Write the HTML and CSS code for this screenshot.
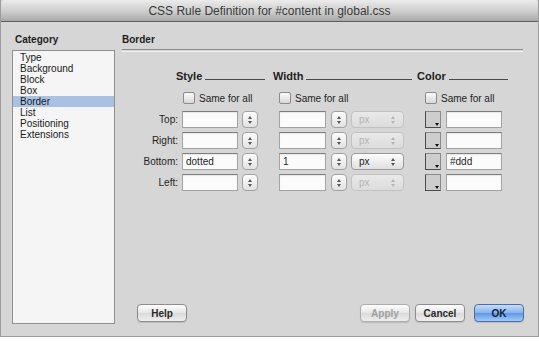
FILE: index.html
```html
<!DOCTYPE html>
<html lang="en">
<head>
  <meta charset="UTF-8">
  <title>CSS Rule Definition</title>
  <link rel="stylesheet" href="styles.css">
</head>
<body>
  <div class="window">
    <div class="titlebar">CSS Rule Definition for #content in global.css</div>

    <div class="content">
      <div class="sidebar">
        <div class="pane-label">Category</div>
        <div class="category-list">
          <div class="category">Type</div>
          <div class="category">Background</div>
          <div class="category">Block</div>
          <div class="category">Box</div>
          <div class="category selected">Border</div>
          <div class="category">List</div>
          <div class="category">Positioning</div>
          <div class="category">Extensions</div>
        </div>
      </div>

      <div class="main">
        <div class="pane-label">Border</div>
        <div class="divider"></div>

        <div class="border-grid">
          <!-- headers -->
          <div></div>
          <div class="col-head head-style"><span>Style</span><i class="rule"></i></div>
          <div class="col-head head-width"><span>Width</span><i class="rule"></i></div>
          <div class="col-head head-color"><span>Color</span><i class="rule"></i></div>

          <!-- same for all -->
          <div></div>
          <div class="check-cell cell-style"><span class="checkbox"></span>Same for all</div>
          <div class="check-cell cell-width"><span class="checkbox"></span>Same for all</div>
          <div class="check-cell cell-color"><span class="checkbox"></span>Same for all</div>

          <!-- Top -->
          <div class="side-label">Top:</div>
          <div class="field-cell cell-style"><span class="text-field style-field"></span><span class="stepper"></span></div>
          <div class="field-cell cell-width"><span class="text-field width-field"></span><span class="stepper"></span><span class="select disabled">px</span></div>
          <div class="field-cell cell-color"><span class="swatch"></span><span class="text-field color-field"></span></div>

          <!-- Right -->
          <div class="side-label">Right:</div>
          <div class="field-cell cell-style"><span class="text-field style-field"></span><span class="stepper"></span></div>
          <div class="field-cell cell-width"><span class="text-field width-field"></span><span class="stepper"></span><span class="select disabled">px</span></div>
          <div class="field-cell cell-color"><span class="swatch"></span><span class="text-field color-field"></span></div>

          <!-- Bottom -->
          <div class="side-label">Bottom:</div>
          <div class="field-cell cell-style"><span class="text-field style-field">dotted</span><span class="stepper"></span></div>
          <div class="field-cell cell-width"><span class="text-field width-field">1</span><span class="stepper"></span><span class="select">px</span></div>
          <div class="field-cell cell-color"><span class="swatch"></span><span class="text-field color-field">#ddd</span></div>

          <!-- Left -->
          <div class="side-label">Left:</div>
          <div class="field-cell cell-style"><span class="text-field style-field"></span><span class="stepper"></span></div>
          <div class="field-cell cell-width"><span class="text-field width-field"></span><span class="stepper"></span><span class="select disabled">px</span></div>
          <div class="field-cell cell-color"><span class="swatch"></span><span class="text-field color-field"></span></div>
        </div>

        <div class="buttons">
          <button class="btn btn-help">Help</button>
          <div class="spacer"></div>
          <button class="btn btn-apply" disabled>Apply</button>
          <button class="btn btn-cancel">Cancel</button>
          <button class="btn btn-ok">OK</button>
        </div>
      </div>
    </div>
  </div>
</body>
</html>
```

FILE: styles.css
```css
body {
  margin: 0;
  background: #fff;
  font-family: "Liberation Sans", Arial, sans-serif;
  font-size: 10px;
  color: #1e1e1e;
}
.window {
  width: 539px;
  height: 337px;
  box-sizing: border-box;
  background: #d6d6d6;
  border: 1px solid #9c9c9c;
  border-top: none;
  display: flex;
  flex-direction: column;
}
.titlebar {
  height: 21px;
  flex: none;
  line-height: 22px;
  text-align: center;
  font-size: 12px;
  color: #3a3a3a;
  background: linear-gradient(#ececec, #c9c9c9 60%, #a8a8a8);
  border-bottom: 1px solid #5f5f5f;
  border-radius: 4px 4px 0 0;
}
.content {
  flex: 1;
  display: flex;
  gap: 7px;
  padding: 12px 13px 12px 11px;
  min-height: 0;
}
.pane-label {
  font-weight: bold;
  line-height: 12px;
  height: 12px;
}

/* sidebar */
.sidebar {
  width: 103px;
  display: flex;
  flex-direction: column;
}
.sidebar .pane-label {
  padding-left: 3px;
}
.category-list {
  flex: 1;
  margin-top: 4px;
  background: #f5f5f5;
  border: 1px solid #8f8f8f;
  padding-top: 1px;
}
.category {
  line-height: 11px;
  height: 11px;
  padding-left: 7px;
  color: #1a1a1a;
}
.category.selected {
  background: #a9c2e4;
}

/* main */
.main {
  flex: 1;
  display: flex;
  flex-direction: column;
}
.divider {
  margin-top: 3px;
  height: 1px;
  border-top: 1px solid #8c8c8c;
  border-bottom: 1px solid #f2f2f2;
  margin-right: 2px;
}
.border-grid {
  margin-top: 18px;
  display: grid;
  grid-template-columns: 56px 94px 144px 109px;
  grid-template-rows: 12px 21px repeat(4, 17px);
  row-gap: 4px;
}
.col-head {
  display: flex;
  align-items: flex-end;
}
.col-head span {
  font-size: 11px;
  font-weight: bold;
  line-height: 12px;
  color: #222;
}
.col-head .rule {
  flex: 1;
  border-bottom: 1px solid #4a4a4a;
  margin: 0 0 2px 3px;
}
.head-style { margin: 0 7px 0 -2px; }
.head-width { margin: 0 4px 0 1px; }
.head-color { margin: 0 17px 0 1px; }

.check-cell {
  display: flex;
  align-items: center;
  gap: 4px;
  align-self: end;
  margin-bottom: 3px;
  height: 12px;
}
.checkbox {
  width: 10px;
  height: 10px;
  border: 1px solid #8a8a8a;
  border-radius: 2px;
  background: linear-gradient(#fafafa, #d8d8d8);
}
.cell-style { padding-left: 4px; }
.cell-width { padding-left: 7px; }
.cell-color { padding-left: 9px; }
.check-cell.cell-style { padding-left: 5px; }

.side-label {
  text-align: right;
  line-height: 17px;
}
.field-cell {
  display: flex;
  align-items: center;
  gap: 4px;
}
.cell-width.field-cell .stepper { margin-left: 1px; }
.cell-color.field-cell { gap: 5px; }

.text-field {
  box-sizing: border-box;
  height: 17px;
  line-height: 15px;
  padding-left: 3px;
  background: #fbfbfb;
  border: 1px solid #a3a3a3;
  border-top-color: #7e7e7e;
  box-shadow: inset 0 1px 1px rgba(0,0,0,0.08);
  font-size: 10px;
}
.style-field { width: 56px; }
.width-field { width: 47px; }
.color-field { width: 56px; }

.stepper {
  box-sizing: border-box;
  width: 16px;
  height: 17px;
  border: 1px solid #a2a2a2;
  border-radius: 4px;
  background: linear-gradient(#fdfdfd, #e2e2e2);
  position: relative;
}
.stepper::before,
.stepper::after {
  content: "";
  position: absolute;
  left: 5px;
  border-left: 2.5px solid transparent;
  border-right: 2.5px solid transparent;
}
.stepper::before {
  top: 4px;
  border-bottom: 3px solid #555;
}
.stepper::after {
  top: 9px;
  border-top: 3px solid #555;
}

.select {
  box-sizing: border-box;
  width: 53px;
  height: 17px;
  line-height: 15px;
  padding-left: 7px;
  border: 1px solid #9a9a9a;
  border-radius: 4px;
  background: linear-gradient(#fdfdfd, #e0e0e0);
  font-size: 10px;
  position: relative;
  color: #222;
}
.select::before,
.select::after {
  content: "";
  position: absolute;
  right: 8px;
  border-left: 2px solid transparent;
  border-right: 2px solid transparent;
}
.select::before {
  top: 4px;
  border-bottom: 3px solid #555;
}
.select::after {
  top: 9px;
  border-top: 3px solid #555;
}
.select.disabled {
  color: #b4b4b4;
  border-color: #c2c2c2;
  background: linear-gradient(#e9e9e9, #dcdcdc);
}
.select.disabled::before { border-bottom-color: #b4b4b4; }
.select.disabled::after { border-top-color: #b4b4b4; }

.swatch {
  box-sizing: border-box;
  width: 16px;
  height: 17px;
  background: #cdcdcd;
  border: 1px solid #8a8a8a;
  border-left-color: #4a4a4a;
  border-bottom-color: #4a4a4a;
  position: relative;
}
.swatch::after {
  content: "";
  position: absolute;
  right: 1px;
  bottom: 1px;
  border-left: 2.5px solid transparent;
  border-right: 2.5px solid transparent;
  border-top: 3px solid #111;
}

/* buttons */
.buttons {
  margin-top: auto;
  margin-bottom: 2px;
  display: flex;
  gap: 5px;
  padding-left: 15px;
  padding-right: 1px;
}
.spacer { flex: 1; }
.btn {
  box-sizing: border-box;
  width: 50px;
  height: 18px;
  padding: 0;
  font-family: "Liberation Sans", Arial, sans-serif;
  font-size: 10px;
  font-weight: bold;
  color: #2a2a2a;
  border: 1px solid #8d8d8d;
  border-radius: 4px;
  background: linear-gradient(#fefefe, #e6e6e6 50%, #d9d9d9 51%, #efefef);
  box-shadow: 0 1px 1px rgba(0,0,0,0.12);
}
.btn-apply {
  color: #a0a0a0;
  border-color: #acacac;
}
.btn-ok {
  margin-left: 4px;
  color: #10223f;
  border-color: #4a6ea6;
  background: linear-gradient(#c5dcf8, #86b3ec 50%, #5d97e6 51%, #a3cbf6);
}
```
